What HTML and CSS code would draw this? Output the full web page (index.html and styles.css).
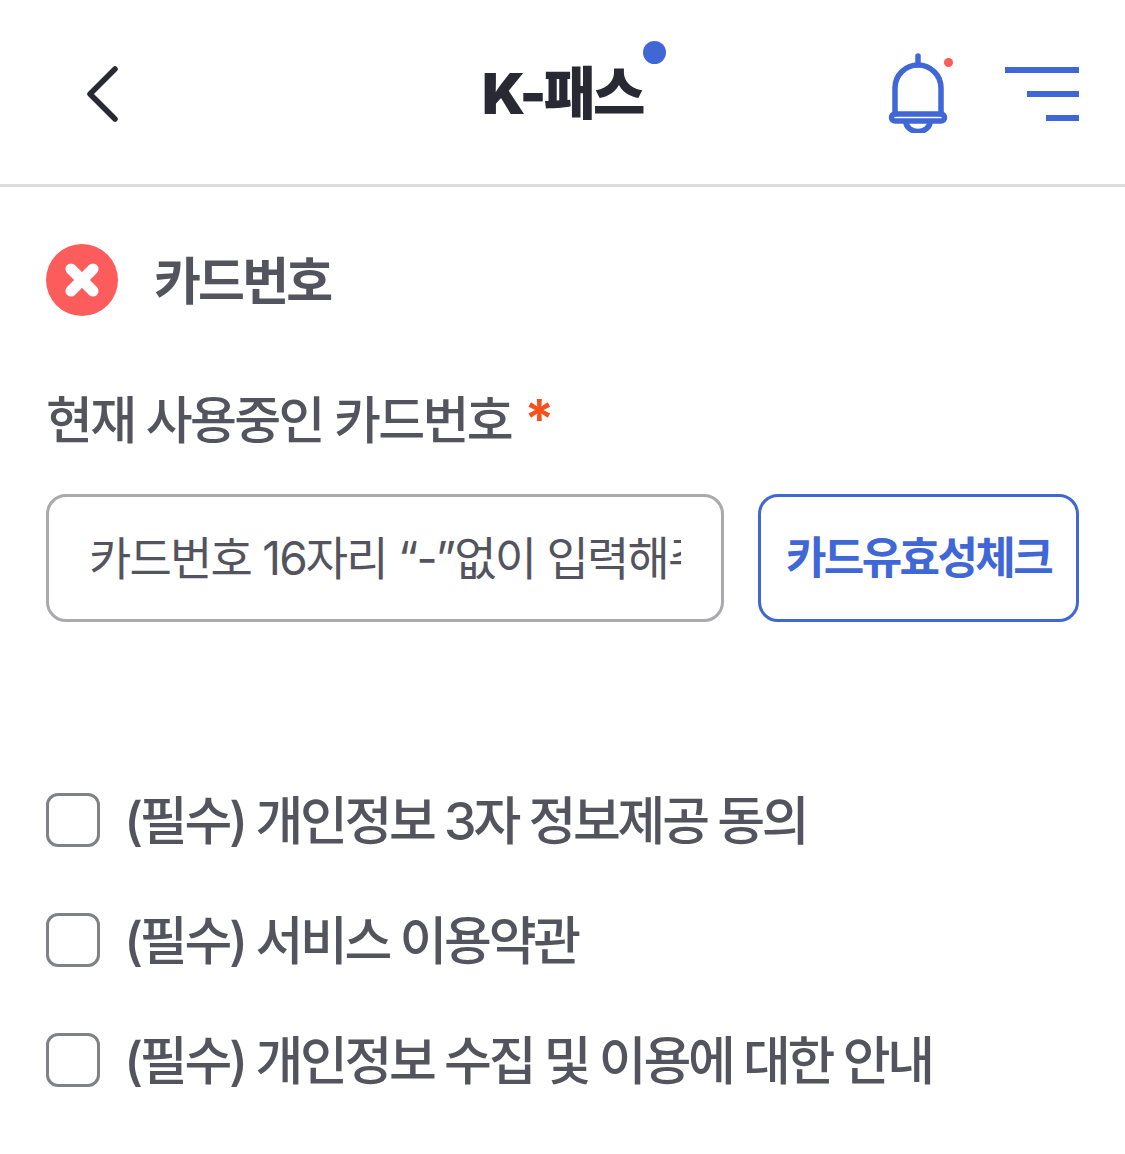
FILE: index.html
```html
<!DOCTYPE html>
<html lang="ko">
<head>
<meta charset="utf-8">
<title>K-패스</title>
<link rel="stylesheet" href="styles.css">
</head>
<body>
<header class="topbar">
  <button class="back" aria-label="뒤로">
    <svg width="34" height="58" viewBox="0 0 34 58"><path d="M30 4 L5 29 L30 54" fill="none" stroke="#292933" stroke-width="5.5" stroke-linecap="round" stroke-linejoin="round"/></svg>
  </button>
  <div class="brand"><span class="brand-name">K-패스</span><i class="brand-dot"></i></div>
  <div class="actions">
    <span class="bell">
      <svg width="64" height="80" viewBox="0 0 64 80"><g fill="none" stroke="#3F67D6" stroke-width="5.5" stroke-linecap="round" stroke-linejoin="round"><path d="M32 3v9"/><path d="M9 61V35a23 23 0 0 1 46 0v26"/><path d="M9 61h46a3.5 3.5 0 0 1 0 7H9a3.5 3.5 0 0 1 0-7z"/><path d="M20 69a12 9.5 0 0 0 24 0"/></g></svg>
      <i class="bell-dot"></i>
    </span>
    <span class="menu"><i class="l1"></i><i class="l2"></i><i class="l3"></i></span>
  </div>
</header>
<main class="content">
  <div class="status">
    <svg class="status-icon" width="72" height="72" viewBox="0 0 72 72"><circle cx="36" cy="36" r="36" fill="#FC5C5C"/><path d="M25 25 L47 47 M47 25 L25 47" stroke="#fff" stroke-width="11" stroke-linecap="round"/></svg>
    <h1 class="status-title">카드번호</h1>
  </div>
  <label class="field-label">현재 사용중인 카드번호<span class="req">*</span></label>
  <div class="field-row">
    <div class="input"><span class="placeholder">카드번호 16자리 “-”없이 입력해주세요</span></div>
    <button class="check-btn">카드유효성체크</button>
  </div>
  <ul class="agree">
    <li><i class="box"></i><span>(필수) 개인정보 3자 정보제공 동의</span></li>
    <li><i class="box"></i><span>(필수) 서비스 이용약관</span></li>
    <li><i class="box"></i><span>(필수) 개인정보 수집 및 이용에 대한 안내</span></li>
  </ul>
</main>
</body>
</html>
```
FILE: styles.css
```css
* { box-sizing: border-box; }
html, body { margin: 0; padding: 0; background: #fff; }
body {
  width: 1125px; height: 1154px; overflow: hidden;
  font-family: "Inter", "Noto Sans CJK KR", sans-serif;
  color: #54545E;
}
.topbar {
  height: 187px;
  border-bottom: 3px solid #DEDEDE;
  display: flex;
  align-items: flex-start;
  position: relative;
}
.back {
  background: none; border: 0; padding: 0;
  margin: 65px 0 0 85px; width: 34px; height: 58px; display: block;
}
.back svg { display: block; }
.brand {
  position: absolute; left: 482px; top: 57px;
}
.brand-name {
  display: block;
  font-size: 57px; line-height: 74px; font-weight: 900;
  color: #292933; letter-spacing: -3px; white-space: nowrap;
}
.brand-dot {
  position: absolute; left: 161px; top: -16px;
  width: 23px; height: 23px; border-radius: 50%; background: #3F67D6;
}
.actions { margin-left: auto; display: flex; align-items: flex-start; }
.bell { position: relative; display: block; margin: 53px 0 0 0; width: 64px; height: 80px; }
.bell svg { display: block; }
.bell-dot {
  position: absolute; left: 58px; top: 5px;
  width: 9px; height: 9px; border-radius: 50%; background: #FC5C5C;
}
.menu {
  width: 74px; margin: 67px 46px 0 55px;
  display: flex; flex-direction: column; align-items: flex-end; gap: 18px;
}
.menu i { display: block; height: 6px; background: #3F67D6; }
.l1 { width: 74px; } .l2 { width: 52px; } .l3 { width: 33px; }
.content { padding: 0 46px; }
.status { display: flex; align-items: flex-start; gap: 36px; margin-top: 57px; height: 72px; }
.status-icon { display: block; flex: none; }
.status-title {
  margin: 0; font-size: 51px; line-height: 76px; font-weight: 600;
  color: #54545E; letter-spacing: -2.8px;
}
.field-label {
  display: block; margin-top: 68px;
  font-size: 51px; line-height: 72px; font-weight: 500; letter-spacing: -2.6px;
  color: #54545E;
}
.req { color: #F4511E; margin-left: 13px; font-size: 54px; font-weight: 700; position: relative; top: -1px; }
.field-row { display: flex; gap: 34px; margin-top: 37px; }
.input {
  width: 678px; height: 128px; border: 3px solid #A9A9AE; border-radius: 20px;
  padding: 0 40px 6px; display: flex; align-items: center; overflow: hidden;
}
.placeholder {
  display: block; width: 100%; overflow: hidden; white-space: nowrap;
  font-size: 46px; letter-spacing: -1.8px; color: #54545E; font-weight: 400;
}
.check-btn {
  width: 321px; height: 128px; background: #fff;
  border: 3px solid #3F67D6; border-radius: 20px; padding: 0 0 6px;
  color: #3F67D6; font: inherit; font-size: 44px; font-weight: 700; letter-spacing: -2.6px; white-space: nowrap;
}
.agree { list-style: none; margin: 162px 0 0; padding: 0; display: flex; flex-direction: column; gap: 48px; }
.agree li { display: flex; align-items: center; height: 72px; gap: 24px; }
.box { width: 54px; height: 54px; border: 3px solid #808087; border-radius: 12px; flex: none; display: block; }
.agree span { font-size: 52px; font-weight: 500; line-height: 72px; padding-top: 4px; letter-spacing: -3.3px; color: #54545E; white-space: nowrap; }
```
